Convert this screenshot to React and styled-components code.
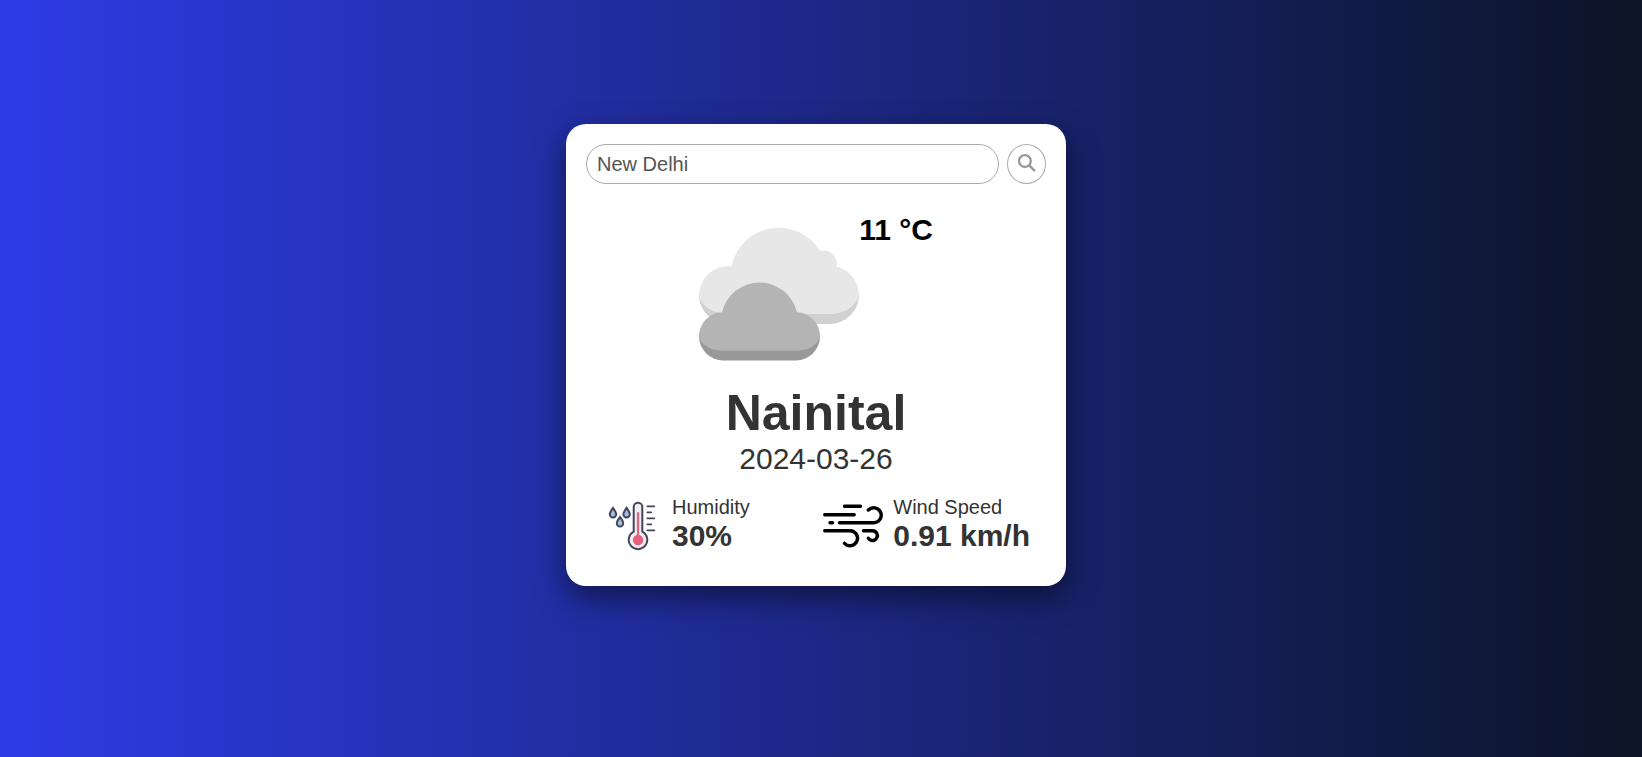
import React, { useState } from "react";
import styled, { createGlobalStyle } from "styled-components";

const GlobalStyle = createGlobalStyle`
  * { box-sizing: border-box; }
  body {
    margin: 0;
    font-family: "Liberation Sans", Arial, sans-serif;
    color: #333;
  }
`;

const Page = styled.main`
  min-height: 100vh;
  display: flex;
  align-items: center;
  justify-content: center;
  padding: 0 10px 47px 0;
  background: linear-gradient(to right, #2d3ce6, #0c1426);
`;

const Card = styled.section`
  width: 500px;
  max-width: 100%;
  padding: 20px 20px 32px;
  border-radius: 20px;
  background: #fff;
  box-shadow: 0 12px 30px rgba(0, 0, 0, 0.5);
`;

const SearchBar = styled.form`
  display: flex;
  gap: 8px;
`;

const SearchInput = styled.input`
  flex: 1;
  min-width: 0;
  height: 40px;
  padding: 0 10px;
  border: 1px solid #aaa;
  border-radius: 20px;
  background: #fff;
  color: #555;
  font: 20px "Liberation Sans", Arial, sans-serif;
  outline: none;
`;

const SearchButton = styled.button`
  display: flex;
  align-items: center;
  justify-content: center;
  width: 39px;
  height: 40px;
  padding: 0 0 2px;
  border: 1px solid #aaa;
  border-radius: 50%;
  background: #fff;
  color: #999;
  cursor: pointer;
`;

const Current = styled.div`
  display: flex;
  align-items: flex-start;
  justify-content: center;
  margin-top: 30px;
`;

const Temperature = styled.strong`
  color: #000;
  font-size: 30px;
  line-height: 32px;
`;

const City = styled.h1`
  margin: 11px 0 0;
  font-size: 50px;
  line-height: 57px;
  text-align: center;
`;

const Day = styled.time`
  display: block;
  font-size: 30px;
  line-height: 34px;
  text-align: center;
`;

const Details = styled.div`
  display: flex;
  justify-content: space-between;
  margin-top: 18px;
  padding: 0 16px;
`;

const Detail = styled.div`
  display: flex;
  align-items: center;
  gap: 10px;
`;

const Label = styled.div`
  font-size: 20px;
  line-height: 23px;
`;

const Value = styled.div`
  font-size: 30px;
  font-weight: bold;
  line-height: 34px;
`;

const SearchIcon = () => (
  <svg width="18" height="18" viewBox="0 0 18 18" fill="none" stroke="currentColor" aria-hidden="true">
    <circle cx="6.9" cy="7.1" r="5.9" strokeWidth="2.3" />
    <path d="M11.2 11.4L16.2 16.4" strokeWidth="2.5" strokeLinecap="round" />
  </svg>
);

const CloudsIcon = () => (
  <svg width="160" height="160" viewBox="0 0 160 160" role="img" aria-label="Cloudy">
    <path d="M0 81H160A29.5 29.5 0 0 1 130.5 110H29.5A29.5 29.5 0 0 1 0 81Z" fill="#d0d0d0" />
    <path
      d="M0 81A29 29 0 0 1 32.5 52.5A48.3 48.3 0 0 1 121 36.7A13.4 13.4 0 0 1 137.5 52.5A29.5 29.5 0 0 1 160 81C158 93 144 100 130 100H30C16 100 2 93 0 81Z"
      fill="#e7e7e7"
    />
    <path d="M0 122H121A24.2 24.2 0 0 1 97 146.4H24A24.2 24.2 0 0 1 0 122Z" fill="#999" />
    <path
      d="M0 122A24 24 0 0 1 23 98.3A38.5 38.5 0 0 1 98 98.3A24 24 0 0 1 121 122C119 132 108 136.7 97 136.7H24C13 136.7 2 132 0 122Z"
      fill="#b4b4b4"
    />
  </svg>
);

const HumidityIcon = () => (
  <svg width="60" height="60" viewBox="1 -1 60 60" fill="none" stroke="#45455a" strokeWidth="2" strokeLinecap="round" aria-hidden="true">
    <path d="M32.7 36.6V12a4.3 4.3 0 0 1 8.6 0V36.6a9.3 9.3 0 1 1-8.6 0Z" fill="#efeff3" />
    <path d="M37 18V43" stroke="#e8607b" strokeWidth="2.2" />
    <circle cx="37" cy="45" r="5.2" fill="#e8607b" stroke="none" />
    <path d="M46.3 11.3h7M46.3 17.3h4M46.3 23.3h7M46.3 29.3h4M46.3 35.3h7" strokeWidth="1.7" />
    <g fill="#9cbfe8">
      <path d="M12 12.9c1.4 2 3.2 4.4 3.2 6.4a3.2 3.2 0 0 1-6.4 0c0-2 1.8-4.4 3.2-6.4Z" />
      <path d="M25.6 12.9c1.4 2 3.2 4.4 3.2 6.4a3.2 3.2 0 0 1-6.4 0c0-2 1.8-4.4 3.2-6.4Z" />
      <path d="M19 22c1.4 2 3.2 4.4 3.2 6.4a3.2 3.2 0 0 1-6.4 0c0-2 1.8-4.4 3.2-6.4Z" />
    </g>
  </svg>
);

const WindIcon = () => (
  <svg width="60" height="60" viewBox="0 -1 60 60" fill="none" stroke="#000" strokeWidth="3.4" strokeLinecap="round" aria-hidden="true">
    <path d="M21.5 11.2H37.5M1.7 19.7H31.2M7 27.7H9.5" />
    <path d="M16.5 27.7H50.7A7.5 7.5 0 1 0 45.3 15" />
    <path d="M1.7 35.7H27.2A7.5 7.5 0 1 1 21.5 48.3" />
    <path d="M40.5 35.7H49.5A4.9 4.9 0 1 1 45.3 43.2" />
  </svg>
);

export default function App() {
  const [query, setQuery] = useState("New Delhi");
  return (
    <>
      <GlobalStyle />
      <Page>
        <Card>
          <SearchBar onSubmit={(e) => e.preventDefault()}>
            <SearchInput
              type="text"
              aria-label="City"
              value={query}
              onChange={(e) => setQuery(e.target.value)}
            />
            <SearchButton type="submit" aria-label="Search">
              <SearchIcon />
            </SearchButton>
          </SearchBar>
          <Current>
            <CloudsIcon />
            <Temperature>11 °C</Temperature>
          </Current>
          <City>Nainital</City>
          <Day dateTime="2024-03-26">2024-03-26</Day>
          <Details>
            <Detail>
              <HumidityIcon />
              <div>
                <Label>Humidity</Label>
                <Value>30%</Value>
              </div>
            </Detail>
            <Detail>
              <WindIcon />
              <div>
                <Label>Wind Speed</Label>
                <Value>0.91 km/h</Value>
              </div>
            </Detail>
          </Details>
        </Card>
      </Page>
    </>
  );
}
